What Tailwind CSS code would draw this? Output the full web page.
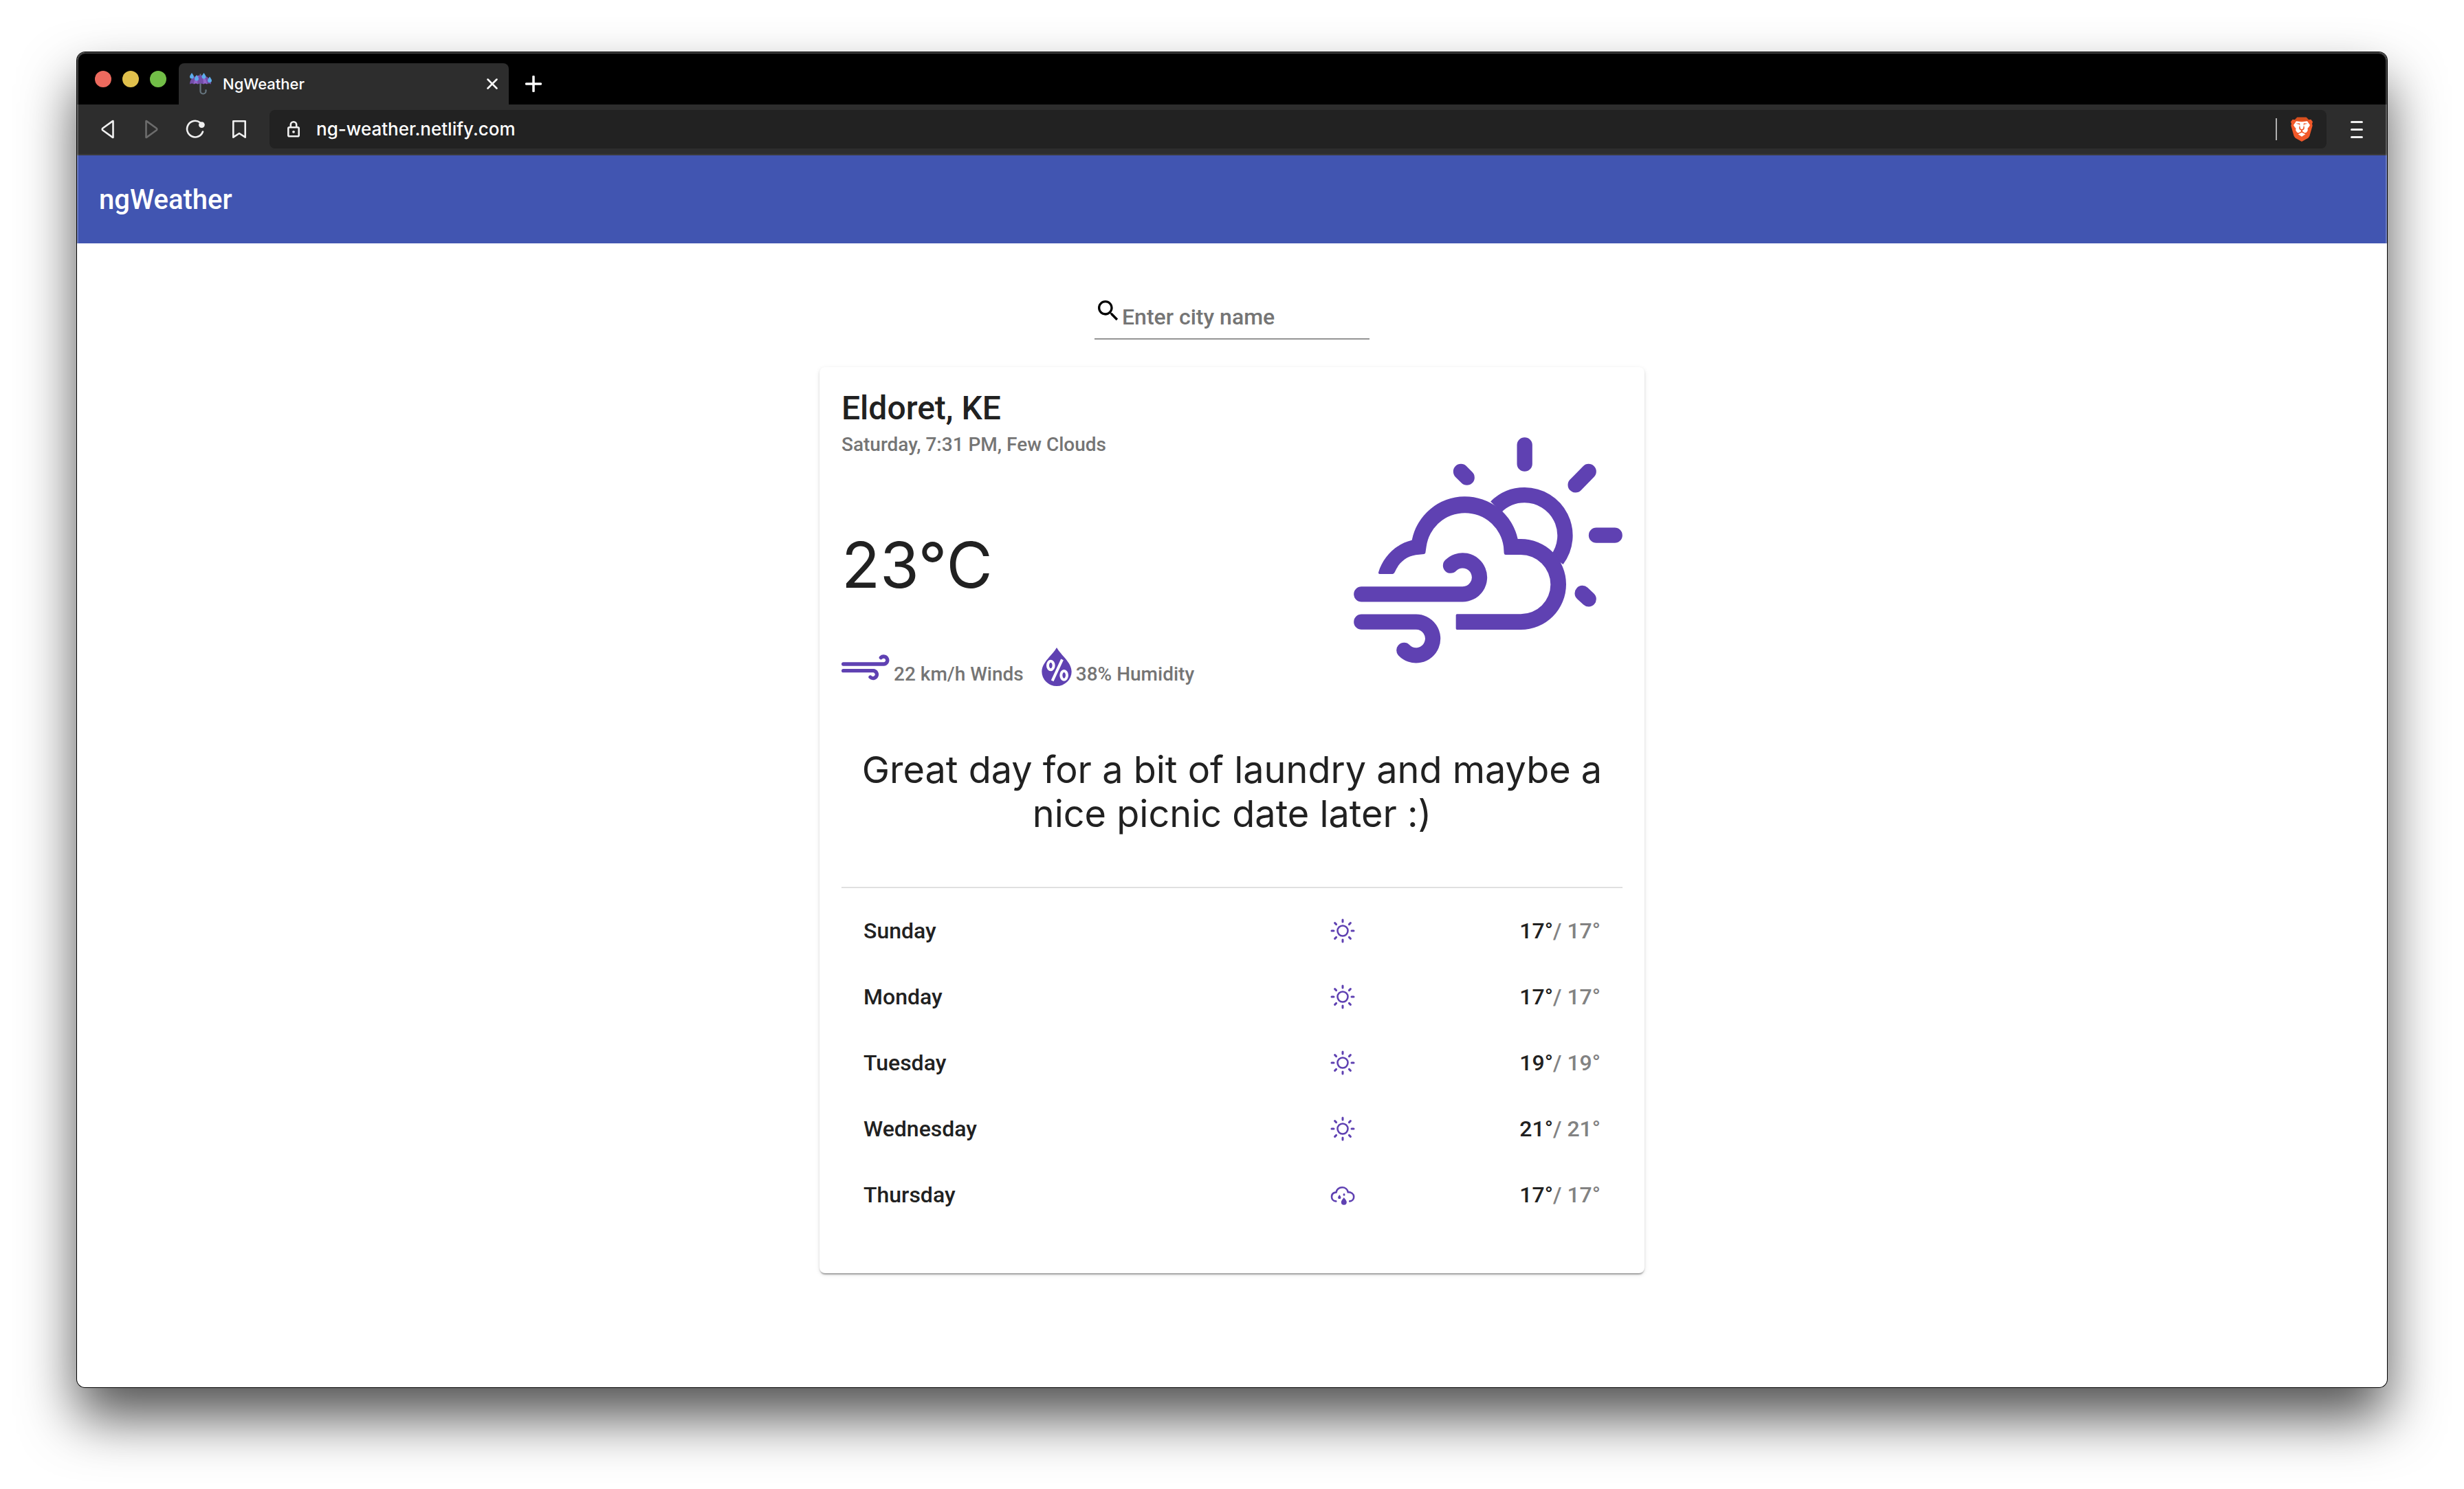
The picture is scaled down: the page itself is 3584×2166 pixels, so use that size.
<!DOCTYPE html>
<html lang="en">
<head>
<meta charset="utf-8">
<meta name="viewport" content="width=device-width, initial-scale=1">
<title>NgWeather</title>
<script src="https://cdn.jsdelivr.net/npm/@tailwindcss/browser@4"></script>
</head>
<body class="flex min-h-screen flex-col bg-white px-28 pt-[76px] pb-[148px] font-['Roboto',sans-serif]">

<svg class="hidden" aria-hidden="true">
  <symbol id="sun" viewBox="0 0 36 36">
    <g fill="none" stroke="currentColor" stroke-linecap="round">
      <circle cx="18" cy="18" r="7.5" stroke-width="2.600"/>
      <path stroke-width="3" d="M18 2v3M18 31v3M2 18h3M31 18h3M6.600 6.600l2 2M27.400 27.400l2 2M6.600 29.400l2-2M27.400 8.600l2-2"/>
    </g>
  </symbol>
  <symbol id="rain" viewBox="0 0 36 36">
    <path fill="none" stroke="currentColor" stroke-width="2.600" stroke-linecap="round" d="M8.300 27.400C4.500 27.100 2 24.500 2 20.900C2 17.300 4.600 14.800 8.600 14.400C9.100 10.300 12.700 7.200 17.200 7.200C21.600 7.200 25 10.200 25.700 14.100C30.600 14.100 34.200 16.800 34.200 20.900C34.200 24.500 31.600 27.100 28.200 27.400"/>
    <path fill="currentColor" d="M13.300 17.900c1.300 1.800 2.200 2.900 2.200 4a2.200 2.200 0 0 1-4.400 0c0-1.100.9-2.200 2.200-4zM20 15.500c.9 1.200 1.500 1.900 1.500 2.600a1.500 1.500 0 0 1-3 0c0-.7.6-1.400 1.500-2.600zM19.800 22c2.400 3.100 4 4.800 4 6.800a4 4 0 0 1-8 0c0-2 1.600-3.700 4-6.800z"/>
  </symbol>
</svg>

<div class="relative flex flex-1 flex-col rounded-xl bg-white shadow-[0_0_0_1px_#000,0_44px_80px_rgba(0,0,0,0.68)]">

  <!-- Tab strip -->
  <div class="flex h-[76px] items-end rounded-t-xl bg-black font-['Inter',sans-serif] text-white">
    <div class="flex gap-4 self-center pt-0.5 pl-[26px] pr-[18px]">
      <button class="size-6 rounded-full bg-[#ed6a5e]" aria-label="Close window"></button>
      <button class="size-6 rounded-full bg-[#e0c04c]" aria-label="Minimise window"></button>
      <button class="size-6 rounded-full bg-[#72be47]" aria-label="Zoom window"></button>
    </div>
    <div class="flex h-[60px] w-[480px] items-center rounded-t-lg bg-[#2d2d2d] px-4">
      <svg class="mr-4 size-8 shrink-0" viewBox="0 0 32 32" aria-hidden="true">
        <path d="M15.500 14v12.500a4 4 0 0 0 8 0v-1.500" fill="none" stroke="#66757f" stroke-width="2.200" stroke-linecap="round"/>
        <path d="M15.500 1.500v3" stroke="#66757f" stroke-width="2"/>
        <path d="M0 16.500C0 8.500 6.500 3.500 15.500 3.500S31 8.500 31 16.500c-1.500-1.500-5-1.500-6 0-2-1.800-3.500-1.800-5 0-2.500-1.500-6-1.500-8.500 0-1.500-1.800-3.500-1.800-5.500 0-1-1.500-4.500-1.500-6 0z" fill="#744eaa"/>
        <path d="M6 16.500C6 11 9 6 14 3.700 11.500 7 11 12 11.500 16.500c-1.500-1.800-3.500-1.800-5.500 0zM25 16.500C25 11 22 6 17 3.700c2.500 3.300 3 8.300 3 12.800 1.500-1.800 3-1.800 5 0z" fill="#9266cc"/>
        <path d="M3 0c1.700 2.600 3 4.200 3 5.600a3 3 0 0 1-6 0C0 4.200 1.300 2.600 3 0zM10 3c1.700 2.600 3 4.200 3 5.600a3 3 0 0 1-6 0C7 7.200 8.300 5.600 10 3zM20.500 0c1.700 2.600 3 4.200 3 5.600a3 3 0 0 1-6 0c0-1.400 1.300-3 3-5.600zM29 5.500c1.700 2.600 3 4.200 3 5.600a3 3 0 0 1-6 0c0-1.400 1.300-3 3-5.600z" fill="#5dadec"/>
      </svg>
      <span class="flex-1 text-[22px] leading-8 font-medium">NgWeather</span>
      <button aria-label="Close tab"><svg class="size-4" viewBox="0 0 16 16" fill="none" stroke="#fff" stroke-width="2.500" stroke-linecap="round"><path d="M1.500 1.500l13 13M14.500 1.500l-13 13"/></svg></button>
    </div>
    <button class="ml-6 flex h-[60px] items-center" aria-label="New tab"><svg class="size-6" viewBox="0 0 24 24" fill="none" stroke="#fff" stroke-width="3.500" stroke-linecap="round"><path d="M12 1.500v21M1.500 12h21"/></svg></button>
  </div>

  <!-- Address bar -->
  <div class="flex h-[74px] items-center border-b-2 border-[#3a3a3a] bg-[#2d2d2d] font-['Inter',sans-serif]">
    <div class="flex gap-8 pr-7 pl-7 text-[#f0f0f0]">
      <button aria-label="Back"><svg class="size-8" viewBox="0 0 32 32" fill="none" stroke="currentColor" stroke-width="2.600" stroke-linejoin="round"><path d="M24.500 4.300v23.400q0 .5-.6.200L9.500 17.500q-1.700-1.500 0-3L23.900 4.100q.6-.4.600.2z"/></svg></button>
      <button class="text-[#6c6c6c]" aria-label="Forward"><svg class="size-8" viewBox="0 0 32 32" fill="none" stroke="currentColor" stroke-width="2.600" stroke-linejoin="round"><path d="M8.500 4.300v23.400q0 .5.600.200l14.400-10.400q1.700-1.500 0-3L9.100 4.100q-.6-.4-.6.200z"/></svg></button>
      <button aria-label="Reload"><svg class="size-8" viewBox="0 0 32 32" fill="none" stroke="currentColor" stroke-width="2.600" stroke-linecap="round"><path d="M23 6.200A11.800 11.800 0 1 0 27 19.500"/><circle cx="25.400" cy="9.600" r="4.400" fill="currentColor" stroke="none"/></svg></button>
      <button aria-label="Bookmark"><svg class="size-8" viewBox="0 0 32 32" fill="none" stroke="currentColor" stroke-width="2.600" stroke-linejoin="round"><path d="M7.300 4.300h17.400v23.400l-8.700-5.700-8.700 5.700z"/></svg></button>
    </div>
    <div class="flex h-14 flex-1 items-center rounded-lg bg-[#222] pr-5 pl-[26px]">
      <svg class="mr-6 h-6 w-[18px]" viewBox="0 0 18 24" fill="none" stroke="#f0f0f0" stroke-width="2.600" aria-hidden="true"><rect x="1.300" y="9.300" width="15.400" height="13" rx="1.500"/><path d="M4.800 9V5.500a4.200 4.200 0 0 1 8.400 0V9"/><circle cx="9" cy="15.800" r="1.900" fill="#f0f0f0" stroke="none"/></svg>
      <input class="min-w-0 flex-1 bg-transparent text-[26px] leading-8 font-medium text-white outline-none" type="text" aria-label="Address" value="ng-weather.netlify.com">
      <div class="mr-5 h-8 w-0.5 bg-[#b0b0b0]"></div>
      <button aria-label="Brave Shields">
        <svg class="h-9 w-8" viewBox="0 0 96 108">
          <path fill="#f1592a" d="M28 2H68L78 13 88 11 96 22 93 30 95 38 82 84 76 92 48 108 20 92 14 84 1 38 3 30 0 22 8 11 18 13z"/>
          <path fill="#d9501e" d="M28 2H68L78 13 74 18 48 16 22 18 18 13z"/>
          <path fill="#fff" d="M24 19L48 22 72 19 84 36 78 46 74 49 74 60 68 68 60 70 48 62 36 70 28 68 22 60 22 49 18 46 12 36z"/>
          <path fill="#f1592a" d="M22 29l15-1 4 3-2 4 3 16 6 4 6-4 3-16-2-4 4-3 15 1-15 4-2 4 3 10-2 8-7 4v5l9 6-12-3-12 3 9-6v-5l-7-4-2-8 3-10-2-4z"/>
          <path fill="#fff" d="M32 76l16-8 16 8-16 10z"/>
        </svg>
      </button>
    </div>
    <button class="pr-[35px] pl-[35px]" aria-label="Menu"><svg class="h-[26px] w-[18px]" viewBox="0 0 18 26" stroke="#f0f0f0" stroke-width="3" stroke-linecap="round"><path d="M1.500 2.500h15M1.500 13.500h15M1.500 24.500h15"/></svg></button>
  </div>

  <!-- App toolbar -->
  <header class="flex h-32 items-center bg-[#4155b1] px-8 pt-0.5">
    <h1 class="text-[40px] leading-[48px] font-medium text-white">ngWeather</h1>
  </header>

  <main class="flex-1 rounded-b-xl pt-[78px] text-[#212121]">
    <label class="mx-auto mb-10 flex h-[62px] w-[400px] border-b-2 border-[#949494]">
      <svg class="size-10 shrink-0" viewBox="0 0 24 24" fill="#000" aria-hidden="true"><path d="M15.500 14h-.79l-.28-.27C15.410 12.590 16 11.110 16 9.500 16 5.910 13.090 3 9.500 3S3 5.910 3 9.500 5.910 16 9.500 16c1.610 0 3.090-.59 4.230-1.570l.27.28v.79l5 4.990L20.490 19l-4.990-5zm-6 0C7.010 14 5 11.990 5 9.500S7.010 5 9.500 5 14 7.010 14 9.500 11.990 14 9.500 14z"/></svg>
      <input class="mt-[9px] h-10 min-w-0 flex-1 bg-transparent text-[32px] leading-10 font-medium outline-none placeholder:text-[#757575]" type="text" placeholder="Enter city name" aria-label="City name">
    </label>

    <section class="mx-auto w-[1200px] max-w-full rounded-lg bg-white px-8 pt-8 pb-[66px] shadow-[0_4px_2px_-2px_rgba(0,0,0,0.2),0_2px_2px_rgba(0,0,0,0.14),0_2px_6px_rgba(0,0,0,0.12)]">
      <div class="flex items-start justify-between">
        <div>
          <h2 class="text-[48px] leading-[56px] font-medium">Eldoret, KE</h2>
          <p class="mt-[7px] text-[28px] leading-9 font-medium text-[#757575]">Saturday, 7:31 PM, Few Clouds</p>
          <p class="mt-[109px] font-['Inter',sans-serif] text-[92px] leading-24">23°C</p>
          <div class="mt-[72px] flex items-end text-[28px] leading-[34px] font-medium text-[#757575]">
            <svg class="mr-1.5 mb-2 h-[38px] w-[70px]" viewBox="42 66 210 114" fill="none" stroke="#5f41b2" stroke-width="16" stroke-linecap="round" aria-hidden="true"><path d="M50 108H226A16.500 16.500 0 1 0 214 80M50 137H181A16.500 16.500 0 1 1 168 165"/></svg>
            <span class="mr-[26px]">22 km/h Winds</span>
            <svg class="mr-1.5 h-14 w-11" viewBox="917 36 132 168" aria-hidden="true">
              <path fill="#5f41b2" d="M983 36C1002 70 1048 100 1048 141A65 63 0 0 1 918 141C918 100 964 70 983 36z"/>
              <g fill="none" stroke="#fff" stroke-width="12"><ellipse cx="957" cy="114" rx="13" ry="19"/><ellipse cx="1015" cy="157" rx="13" ry="19"/><path d="M1007 88L964 181"/></g>
            </svg>
            <span>38% Humidity</span>
          </div>
        </div>
        <svg class="mt-[70px] h-[329px] w-[391px]" viewBox="87 108 1173 987" role="img" aria-label="Few clouds">
          <g fill="none" stroke="#5f41b2" stroke-width="67">
            <path d="M708 412A176.500 176.500 0 0 1 833 360.500A176.500 176.500 0 0 1 974 643"/>
            <path stroke-linecap="round" d="M121 793H562A73.500 73.500 0 1 0 510 668M121 914H358A73 73 0 1 1 307 1038M833 142V224M1112 258L1055 316M555 258L581 284M1146 536H1226M1085 789L1112 814"/>
          </g>
          <path fill="#5f41b2" d="M195 698C215 630 272 573 341 557A236 236 0 0 1 803 552H816A198 198 0 0 1 816 948H538Q533 948 533 943V885Q533 880 538 880H816A130 129.500 0 0 0 816 621H750Q744 621 743 614L741 586A170 170 0 0 0 404 586L400 613Q399 617 394 618L358 622C315 628 283 658 267 695Q263 705 257 705H200Q194 705 195 698z"/>
        </svg>
      </div>

      <p class="mt-[90px] text-center font-['Inter',sans-serif] text-[54px] leading-16">Great day for a bit of laundry and maybe a nice picnic date later :)</p>

      <hr class="mt-[74px] mb-3.5 border-t-2 border-[#e0e0e0]">

      <table class="w-full table-fixed text-[32px] leading-10 font-medium">
        <colgroup><col><col class="w-9"><col class="w-[389px]"></colgroup>
        <tbody>
          <tr class="h-24"><th class="pl-8 text-left font-medium" scope="row">Sunday</th><td><svg class="size-9 text-[#5f41b2]" role="img" aria-label="Sunny"><use href="#sun"/></svg></td><td class="pr-8 text-right">17°<span class="text-[#828282]">/ 17°</span></td></tr>
          <tr class="h-24"><th class="pl-8 text-left font-medium" scope="row">Monday</th><td><svg class="size-9 text-[#5f41b2]" role="img" aria-label="Sunny"><use href="#sun"/></svg></td><td class="pr-8 text-right">17°<span class="text-[#828282]">/ 17°</span></td></tr>
          <tr class="h-24"><th class="pl-8 text-left font-medium" scope="row">Tuesday</th><td><svg class="size-9 text-[#5f41b2]" role="img" aria-label="Sunny"><use href="#sun"/></svg></td><td class="pr-8 text-right">19°<span class="text-[#828282]">/ 19°</span></td></tr>
          <tr class="h-24"><th class="pl-8 text-left font-medium" scope="row">Wednesday</th><td><svg class="size-9 text-[#5f41b2]" role="img" aria-label="Sunny"><use href="#sun"/></svg></td><td class="pr-8 text-right">21°<span class="text-[#828282]">/ 21°</span></td></tr>
          <tr class="h-24"><th class="pl-8 text-left font-medium" scope="row">Thursday</th><td><svg class="size-9 text-[#5f41b2]" role="img" aria-label="Rain"><use href="#rain"/></svg></td><td class="pr-8 text-right">17°<span class="text-[#828282]">/ 17°</span></td></tr>
        </tbody>
      </table>
    </section>
  </main>

  <!-- Light rim along the window edge -->
  <div class="pointer-events-none absolute inset-0 rounded-xl border-2 border-white/25"></div>
</div>
</body>
</html>
